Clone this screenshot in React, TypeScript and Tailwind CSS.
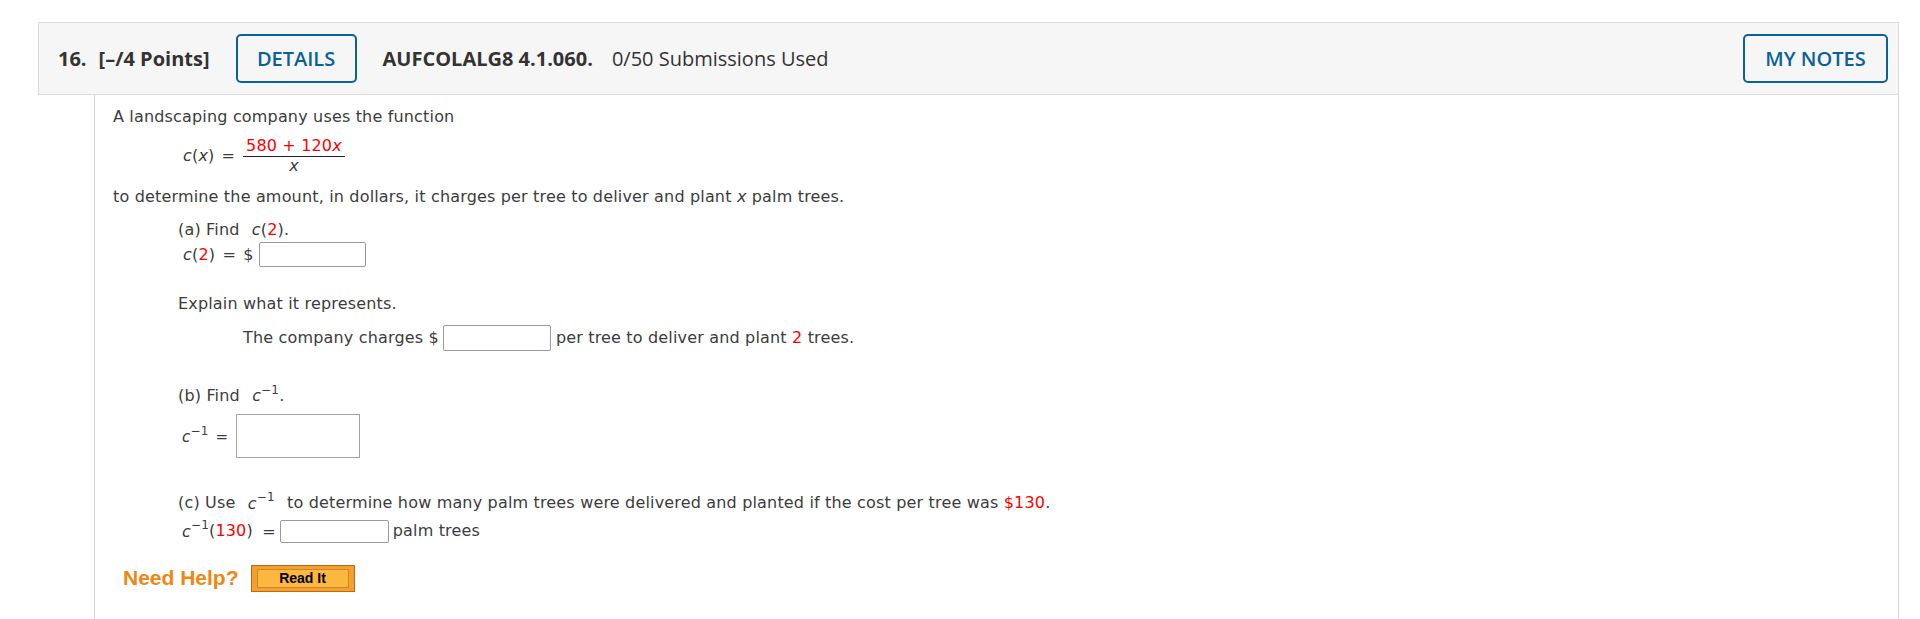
import React from 'react';

const Sup = () => <sup className="relative top-[-1px] align-super text-[12px] leading-none not-italic">−1</sup>;

const CInv = () => (
    <span>
        <i>c</i>
        <Sup />
    </span>
);

const Red: React.FC<{ children: React.ReactNode }> = ({ children }) => (
    <span className="text-[#ff0000]">{children}</span>
);

const Box: React.FC<{ className: string }> = ({ className }) => (
    <input
        type="text"
        className={`border border-[#9a9a9a] rounded-[2px] bg-white outline-none ${className}`}
    />
);

export default function App() {
    return (
        <div className="min-h-[619px] bg-white pt-[22px] pl-[38px] pr-[21px]">
            {/* question header */}
            <div
                className="h-[73px] flex items-center border border-[#dcdcdc] bg-[#f6f6f6] pl-[19px] pr-[10px] text-[20px] text-[#333]"
                style={{ fontFamily: '"Open Sans", sans-serif' }}
            >
                <span className="font-bold">16.</span>
                <span className="font-bold ml-[12px]">[–/4 Points]</span>
                <button className="ml-[26px] h-[49px] w-[121px] rounded-[5px] border-2 border-[#0b6199] text-[#0b6199] font-semibold">
                    DETAILS
                </button>
                <span className="ml-[26px] font-bold">AUFCOLALG8 4.1.060.</span>
                <span className="ml-[19px]">0/50 Submissions Used</span>
                <button className="ml-auto h-[49px] w-[145px] rounded-[5px] border-2 border-[#0b6199] text-[#0b6199] font-semibold">
                    MY NOTES
                </button>
            </div>

            {/* question body */}
            <div
                className="ml-[56px] h-[524px] border-x border-[#d4d4d4] pl-[18px] pt-[12px] text-[16px] leading-[20px] tracking-[0.17px] text-[#3c3c3c]"
                style={{ fontFamily: '"DejaVu Sans", Verdana, sans-serif' }}
            >
                <div>A landscaping company uses the function</div>

                <div className="mt-[10px] ml-[70px] flex items-center">
                    <span>
                        <i>c</i>(<i>x</i>)
                    </span>
                    <span className="ml-[7px]">=</span>
                    <span className="ml-[8px] inline-flex flex-col items-center">
                        <span className="px-[3px] leading-[18px] border-b border-[#222] pb-[1px]">
                            <Red>
                                580 + 120<i>x</i>
                            </Red>
                        </span>
                        <span className="leading-[18px]">
                            <i>x</i>
                        </span>
                    </span>
                </div>

                <div className="mt-[12px]">
                    to determine the amount, in dollars, it charges per tree to deliver and plant <i>x</i> palm trees.
                </div>

                <div className="ml-[65px]">
                    <div className="mt-[13px]">
                        (a) Find <span className="ml-[7px]"><i>c</i>(<Red>2</Red>).</span>
                    </div>
                    <div className="mt-[2px] ml-[5px] flex items-center h-[25px]">
                        <span>
                            <i>c</i>(<Red>2</Red>) <span className="mx-[2px]">=</span> $
                        </span>
                        <Box className="ml-[5px] w-[107px] h-[25px]" />
                    </div>

                    <div className="mt-[27px]">Explain what it represents.</div>
                    <div className="mt-[11px] ml-[65px] flex items-center h-[26px]">
                        <span>The company charges $</span>
                        <Box className="ml-[4px] w-[108px] h-[26px]" />
                        <span className="ml-[5px]">
                            per tree to deliver and plant <Red>2</Red> trees.
                        </span>
                    </div>

                    <div className="mt-[34px]">
                        (b) Find{' '}
                        <span className="ml-[7px]">
                            <CInv />.
                        </span>
                    </div>
                    <div className="mt-[8px] ml-[4px] flex items-center h-[44px]">
                        <span className="text-[15px]">
                            <CInv /> <span className="ml-[2px]">=</span>
                        </span>
                        <input
                            type="text"
                            className="ml-[8px] w-[124px] h-[44px] border border-[#a3a3a3] bg-white outline-none"
                        />
                    </div>

                    <div className="mt-[34px]">
                        (c) Use{' '}
                        <span className="ml-[7px] mr-[7px]">
                            <CInv />
                        </span>{' '}
                        to determine how many palm trees were delivered and planted if the cost per tree was{' '}
                        <Red>$130</Red>.
                    </div>
                    <div className="mt-[6px] ml-[4px] flex items-center h-[23px]">
                        <span>
                            <CInv />(<Red>130</Red>) <span className="ml-[4px]">=</span>
                        </span>
                        <Box className="ml-[4px] w-[109px] h-[23px]" />
                        <span className="ml-[4px]">palm trees</span>
                    </div>
                </div>

                <div className="mt-[22px] ml-[10px] flex items-center h-[27px]">
                    <span
                        className="text-[21px] font-bold text-[#ef8712] tracking-normal"
                        style={{ fontFamily: '"Liberation Sans", Arial, sans-serif' }}
                    >
                        Need Help?
                    </span>
                    <button
                        className="ml-[12px] w-[104px] h-[27px] border border-[#b86a1a] bg-[#f4a02a] px-[5px] py-[3px]"
                        style={{ fontFamily: '"Liberation Sans", Arial, sans-serif' }}
                    >
                        <span className="flex h-full w-full items-center justify-center border border-[#c98530] bg-[#fcb741] text-[14px] font-bold leading-none tracking-normal text-black">
                            Read It
                        </span>
                    </button>
                </div>
            </div>
        </div>
    );
}
